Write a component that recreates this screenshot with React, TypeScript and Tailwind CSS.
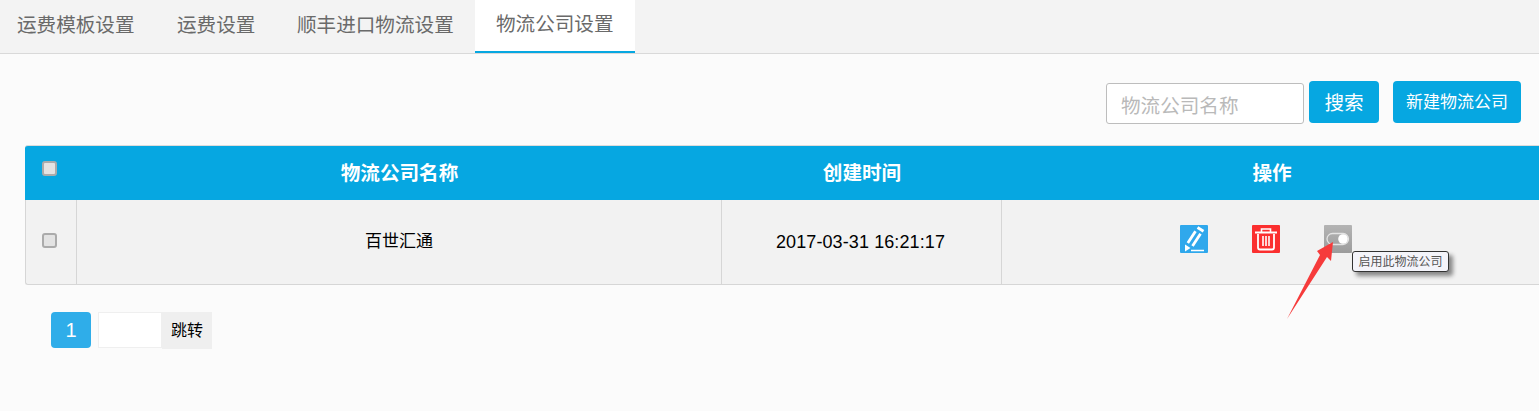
import { useState } from 'react';

const fontStack = 'font-["Liberation_Sans","Noto_Sans_CJK_SC",sans-serif]';

const tabs = [
  { label: '运费模板设置', className: 'w-[140px]' },
  { label: '运费设置', className: 'w-[120px] pl-[20px]' },
  { label: '顺丰进口物流设置', className: 'w-[198px] pl-[20px]' },
  { label: '物流公司设置', className: 'w-[160px] pl-[21px] border-b-2 border-[#06a7e1] bg-white' },
];

function Checkbox() {
  return (
    <span className="block h-[15px] w-[15px] rounded-[3px] border-2 border-[#ababab] bg-[#e3e3e3]" />
  );
}

function PencilIcon() {
  return (
    <svg viewBox="0 0 28 28" className="h-7 w-7 rounded-[1px]" fill="none" stroke="#fff">
      <rect width="28" height="28" fill="#2fa8ec" stroke="none" />
      <path d="M17.500 2.500l6 3.800" strokeWidth="2.800" />
      <path d="M7.800 18L15.500 6.200M12.500 21L20.500 8.800" strokeWidth="2.800" />
      <path d="M5 19.500l5.500 3.500L5 26.500z" fill="#fff" stroke="none" />
      <path d="M11 25.500h13" strokeWidth="1.400" />
    </svg>
  );
}

function TrashIcon() {
  return (
    <svg viewBox="0 0 28 28" className="h-7 w-7 rounded-[1px]" fill="none" stroke="#fff">
      <rect width="28" height="28" fill="#fb2f2f" stroke="none" />
      <path d="M3 7.500h22" strokeWidth="2" />
      <path d="M9.500 7V4h9v3" strokeWidth="1.600" />
      <path d="M6 9v13.500a2 2 0 0 0 2 2h12a2 2 0 0 0 2-2V9" strokeWidth="1.800" />
      <path d="M11 11v10M14 11v10M17 11v10" strokeWidth="1.600" />
    </svg>
  );
}

function ToggleIcon() {
  return (
    <svg viewBox="0 0 28 28" className="h-7 w-7 rounded-[1px] bg-gradient-to-b from-[#b4b4b4] to-[#9c9c9c]" fill="none">
      <rect x="3" y="8.500" width="21.500" height="11" rx="5.500" stroke="#e4e4e4" strokeWidth="1.300" />
      <circle cx="19" cy="14" r="4.800" fill="#fff" />
    </svg>
  );
}

export default function App() {
  const [keyword, setKeyword] = useState('');

  return (
    <div className={`h-[411px] w-[1539px] overflow-hidden bg-[#fbfbfb] ${fontStack}`}>
      <div className="flex h-[54px] border-b border-[#d9d9d9] bg-[#f3f3f3] pl-[17px] text-[19.6px] text-[#6a6a6a]">
        {tabs.map((tab) => (
          <div key={tab.label} className={`flex h-[53px] items-center pb-[2px] ${tab.className}`}>
            {tab.label}
          </div>
        ))}
      </div>

      <div className="flex justify-end pt-[27px] pr-[18px]">
        <input
          value={keyword}
          onChange={(e) => setKeyword(e.target.value)}
          placeholder="物流公司名称"
          className="mt-[2px] h-[41px] w-[198px] rounded-[3px] border border-[#bdbdbd] bg-white px-[14px] pt-[5px] text-[19.6px] outline-none placeholder:text-[#b9b9b9]"
        />
        <button className="ml-[5px] h-[42px] w-[70px] rounded-[4px] bg-[#06a7e1] pt-[3px] text-[19.6px] text-white">
          搜索
        </button>
        <button className="ml-[14px] h-[42px] w-[128px] rounded-[4px] bg-[#06a7e1] pt-[2px] text-[17px] text-white">
          新建物流公司
        </button>
      </div>

      <div className="relative mt-[21px] ml-[25px]">
        <div className="grid h-[55px] grid-cols-[51px_645px_280px_538px] rounded-tl-[3px] border-t border-[#dcdcdc] bg-[#06a7e1] text-[19.6px] font-bold text-white">
          <div className="pt-[15px] pl-[17px]">
            <Checkbox />
          </div>
          <div className="flex items-center justify-center pt-[1px] pl-[2px]">物流公司名称</div>
          <div className="flex items-center justify-center pt-[1px] pl-[2px]">创建时间</div>
          <div className="flex items-center justify-center pt-[1px] pl-[4px]">操作</div>
        </div>

        <div className="grid h-[85px] grid-cols-[51px_645px_280px_538px] rounded-bl-[3px] border-b border-l border-[#d6d6d6] bg-[#f2f2f2] text-black">
          <div className="border-r border-[#d6d6d6] pt-[33px] pl-[16px]">
            <Checkbox />
          </div>
          <div className="flex items-center justify-center border-r border-[#d6d6d6] text-[17px]">
            百世汇通
          </div>
          <div className="flex items-center justify-center border-r border-[#d6d6d6] pr-[2px] text-[18px] tracking-[0.1px]">
            2017-03-31 16:21:17
          </div>
          <div className="flex gap-[44px] pt-[25px] pl-[178px]">
            <PencilIcon />
            <TrashIcon />
            <ToggleIcon />
          </div>
        </div>

        <div className="absolute top-[106px] left-[1327px] flex h-[21px] w-[97px] items-center justify-center rounded-[3px] border border-[#333] bg-[#f4f4fa] text-[12px] whitespace-nowrap text-[#555] shadow-[4px_4px_4px_#888]">
          启用此物流公司
        </div>

        <svg
          viewBox="0 0 60 90"
          className="pointer-events-none absolute top-[92px] left-[1258px] h-[90px] w-[60px]"
        >
          <path d="M4 82L37 18 34 14 50 5 48 24 44 20z" fill="#f63b3b" />
        </svg>
      </div>

      <div className="mt-[27px] ml-[51px] flex">
        <div className="flex h-[36px] w-[40px] items-center justify-center rounded-[4px] bg-[#2fade9] text-[20px] text-white">
          1
        </div>
        <div className="ml-[7px] h-[36px] w-[64px] border border-[#efefef] bg-white" />
        <div className="flex h-[37px] w-[50px] items-center justify-center bg-[#efefef] text-[16px] text-black">
          跳转
        </div>
      </div>
    </div>
  );
}
